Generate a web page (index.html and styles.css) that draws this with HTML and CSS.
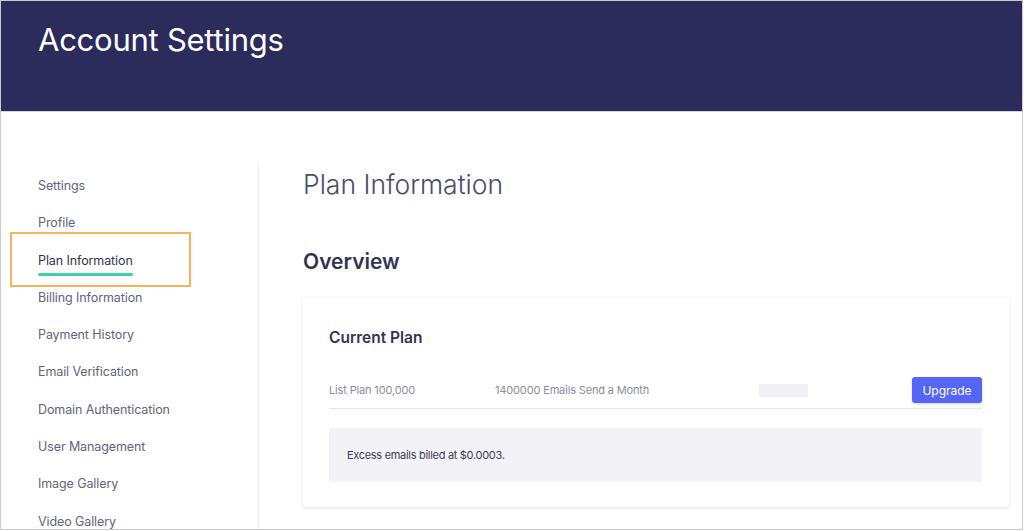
FILE: index.html
```html
<!DOCTYPE html>
<html lang="en">
<head>
<meta charset="UTF-8">
<meta name="viewport" content="width=device-width, initial-scale=1.0">
<title>Account Settings</title>
<link rel="stylesheet" href="styles.css">
</head>
<body>

<div class="frame">
    <header class="topbar">
        <h1>Account Settings</h1>
    </header>

    <div class="page">
        <nav class="sidebar">
            <a href="#">Settings</a>
            <a href="#">Profile</a>
            <a href="#" class="active"><span class="label">Plan Information</span></a>
            <a href="#">Billing Information</a>
            <a href="#">Payment History</a>
            <a href="#">Email Verification</a>
            <a href="#">Domain Authentication</a>
            <a href="#">User Management</a>
            <a href="#">Image Gallery</a>
            <a href="#">Video Gallery</a>
        </nav>

        <main class="content">
            <h2 class="page-title">Plan Information</h2>
            <h3 class="section-title">Overview</h3>

            <div class="card">
                <h4>Current Plan</h4>
                <div class="plan-row">
                    <span class="plan-name">List Plan 100,000</span>
                    <span class="plan-emails">1400000 Emails Send a Month</span>
                    <span class="plan-price"></span>
                    <button class="btn">Upgrade</button>
                </div>
                <div class="note">Excess emails billed at $0.0003.</div>
            </div>
        </main>
    </div>
</div>

</body>
</html>
```

FILE: styles.css
```css
body {
    font-family: 'Inter', 'Liberation Sans', sans-serif;
    background-color: #fff;
    margin: 0;
    padding: 0;
}

.frame {
    width: 1023px;
    height: 530px;
    box-sizing: border-box;
    border: 1px solid #c9c9cf;
    overflow: hidden;
}

.topbar {
    height: 111px;
    box-sizing: border-box;
    background-color: #2b2b5c;
    border-bottom: 1px solid #d3d3dd;
    padding: 20px 0 0 37px;
}

.topbar h1 {
    margin: 0;
    color: #fff;
    font-size: 31px;
    font-weight: 400;
    letter-spacing: -0.25px;
}

.page {
    display: flex;
    padding-top: 53px;
}

.sidebar {
    width: 257px;
    flex-shrink: 0;
    border-right: 1px solid #ececf1;
    padding-top: 2px;
    display: flex;
    flex-direction: column;
    height: 400px;
}

.sidebar a {
    display: block;
    height: 37.3px;
    line-height: 37.3px;
    padding-left: 37px;
    color: #62647b;
    font-size: 12.5px;
    letter-spacing: -0.1px;
    text-decoration: none;
}

.sidebar a.active {
    position: relative;
    color: #33354f;
}

.sidebar a.active::before {
    content: "";
    position: absolute;
    left: 9px;
    top: -10px;
    width: 177px;
    height: 51px;
    border: 2px solid #f6b25e;
}

.sidebar .label {
    position: relative;
    display: inline-block;
}

.sidebar .label::after {
    content: "";
    position: absolute;
    left: 0;
    right: 0;
    top: 31px;
    height: 3px;
    border-radius: 2px;
    background-color: #3dd3a0;
}

.content {
    flex: 1;
    padding: 0 13px 0 44px;
}

.page-title {
    margin: 2px 0 0;
    color: #4a4c66;
    font-size: 26.5px;
    font-weight: 300;
    line-height: 34px;
}

.section-title {
    margin: 47px 0 0;
    color: #33354f;
    font-size: 21px;
    font-weight: 600;
    line-height: 28px;
}

.card {
    margin-top: 21px;
    padding: 28px 27px 25px 26px;
    background-color: #fff;
    border-radius: 4px;
    box-shadow: 0 1px 4px rgba(40, 40, 80, 0.12);
}

.card h4 {
    margin: 2px 0 0;
    color: #33354f;
    font-size: 15.5px;
    font-weight: 600;
    line-height: 22px;
}

.plan-row {
    display: flex;
    align-items: center;
    margin-top: 28px;
    padding-bottom: 5px;
    border-bottom: 1px solid #e6e6ec;
    font-size: 11px;
    letter-spacing: -0.15px;
    color: #8b8d9e;
}

.plan-name {
    width: 166px;
}

.plan-emails {
    width: 264px;
}

.plan-price {
    width: 49px;
    height: 13px;
    background-color: #f1f1f5;
}

.btn {
    margin-left: auto;
    width: 70px;
    height: 26px;
    border: none;
    border-radius: 3px;
    background-color: #5565f6;
    color: #fff;
    font-family: inherit;
    font-size: 12px;
    box-shadow: 0 1px 3px rgba(60, 70, 200, 0.25);
    cursor: pointer;
}

.note {
    margin-top: 19px;
    height: 54px;
    line-height: 54px;
    padding-left: 18px;
    background-color: #f2f2f7;
    color: #3c3e55;
    font-size: 11px;
    letter-spacing: -0.3px;
}
```
